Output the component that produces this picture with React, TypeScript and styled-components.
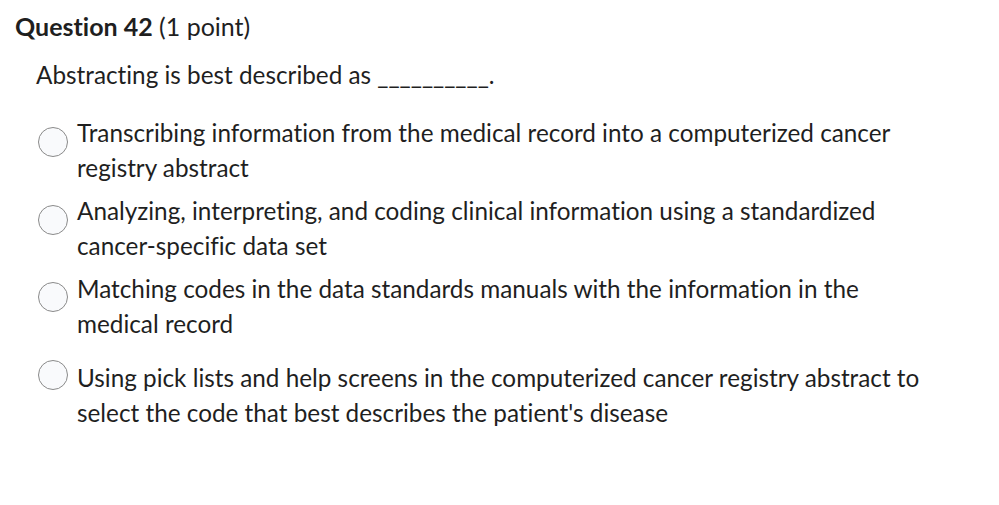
import React from "react";
import styled, { createGlobalStyle } from "styled-components";

const Global = createGlobalStyle`
  body {
    margin: 0;
    background: #ffffff;
    font-family: Lato, "Liberation Sans", sans-serif;
    color: #1f1f1f;
    font-variant-ligatures: none;
  }
`;

const Page = styled.div`
  padding: 11px 15px;
`;

const Title = styled.h2`
  margin: 0;
  font-size: 25px;
  line-height: 30px;
  font-weight: 400;
  color: #1f1f1f;
`;

const Strong = styled.span`
  font-weight: 700;
`;

const Prompt = styled.p`
  margin: 16px 0 0 21px;
  font-size: 24.3px;
  line-height: 35px;
`;

const Options = styled.div`
  display: flex;
  flex-direction: column;
  margin: 23px 0 0 23px;
`;

const Option = styled.label<{ $gap: number; $dotOffset: number }>`
  display: flex;
  align-items: flex-start;
  gap: 9px;
  margin-top: ${(p) => p.$gap}px;
  font-size: 24.3px;
  line-height: 35px;

  & > span:first-child {
    margin-top: ${(p) => p.$dotOffset}px;
  }
`;

const Radio = styled.span`
  flex: none;
  width: 30px;
  height: 30px;
  border-radius: 50%;
  border: 1px solid #8a8a8a;
  background: #f9fafc;
  box-sizing: border-box;
`;

const OptionText = styled.span`
  flex: 1;
  max-width: 855px;
`;

const options = [
  {
    text: "Transcribing information from the medical record into a computerized cancer registry abstract",
    gap: 0,
    dot: 12,
  },
  {
    text: "Analyzing, interpreting, and coding clinical information using a standardized cancer-specific data set",
    gap: 8,
    dot: 12,
  },
  {
    text: "Matching codes in the data standards manuals with the information in the medical record",
    gap: 8,
    dot: 11,
  },
  {
    text: "Using pick lists and help screens in the computerized cancer registry abstract to select the code that best describes the patient's disease",
    gap: 19,
    dot: 0,
  },
];

export default function App() {
  return (
    <Page>
      <Global />
      <Title>
        <Strong>Question 42</Strong> (1 point)
      </Title>
      <Prompt>Abstracting is best described as __________.</Prompt>
      <Options>
        {options.map((o, i) => (
          <Option key={i} $gap={o.gap} $dotOffset={o.dot}>
            <Radio />
            <OptionText>{o.text}</OptionText>
          </Option>
        ))}
      </Options>
    </Page>
  );
}
